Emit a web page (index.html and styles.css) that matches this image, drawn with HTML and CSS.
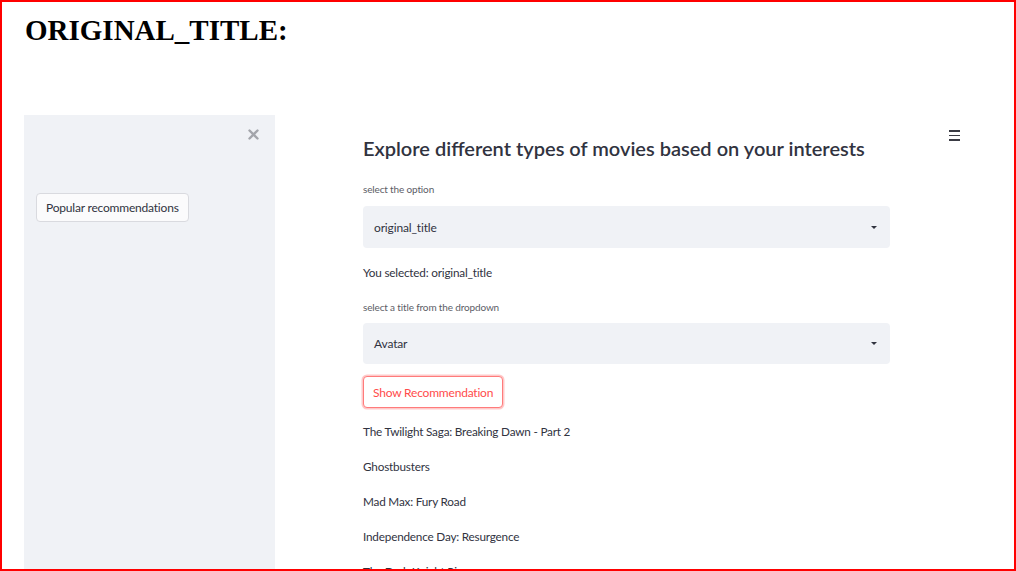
FILE: index.html
```html
<!DOCTYPE html>
<html>
<head>
<meta charset="utf-8">
<link rel="stylesheet" href="styles.css">
</head>
<body>
<div class="frame">
  <h1 class="slide-title">ORIGINAL_TITLE:</h1>
  <div class="app">
    <aside class="sidebar">
      <div class="close-row">
        <svg class="close" width="11" height="11" viewBox="0 0 11 11"><path d="M1.5 1.5 L9.5 9.5 M9.5 1.5 L1.5 9.5" stroke="#a3a5ab" stroke-width="2.4" stroke-linecap="round"/></svg>
      </div>
      <button class="side-btn">Popular recommendations</button>
    </aside>
    <main class="main">
      <div class="content">
        <h2 class="heading">Explore different types of movies based on your interests</h2>
        <label class="label first">select the option</label>
        <div class="select"><span>original_title</span><span class="caret"></span></div>
        <p class="text sel">You selected: original_title</p>
        <label class="label second">select a title from the dropdown</label>
        <div class="select"><span>Avatar</span><span class="caret"></span></div>
        <button class="primary">Show Recommendation</button>
        <p class="text item">The Twilight Saga: Breaking Dawn - Part 2</p>
        <p class="text item">Ghostbusters</p>
        <p class="text item">Mad Max: Fury Road</p>
        <p class="text item">Independence Day: Resurgence</p>
        <p class="text item">The Dark Knight Rises</p>
      </div>
      <div class="menu"><span></span><span></span><span></span></div>
    </main>
  </div>
</div>
</body>
</html>
```
FILE: styles.css
```css
html, body {
  margin: 0;
  padding: 0;
  background: #fff;
}
.frame {
  width: 1016px;
  height: 571px;
  box-sizing: border-box;
  border: 2px solid #ff0000;
  overflow: hidden;
  padding-left: 22px;
  background: #fff;
}
.slide-title {
  font-family: "Liberation Serif", serif;
  font-weight: bold;
  font-size: 29px;
  line-height: 37px;
  margin: 10px 0 0 1px;
  color: #000;
}
.app {
  display: flex;
  margin-top: 66px;
  height: 600px;
  font-family: "Lato", "Open Sans", sans-serif;
  color: #31333f;
}
.sidebar {
  width: 251px;
  flex: none;
  background: #f0f2f6;
  padding: 14px 12px 0 12px;
  box-sizing: border-box;
  display: flex;
  flex-direction: column;
  align-items: flex-start;
}
.close-row {
  align-self: stretch;
  display: flex;
  justify-content: flex-end;
  padding-right: 4px;
}
.close {
  display: block;
}
.side-btn {
  margin-top: 53px;
  height: 29px;
  padding: 0 9px;
  background: #fbfbfc;
  border: 1px solid #d9dadf;
  border-radius: 4px;
  font-family: "Lato", sans-serif;
  font-size: 12px;
  letter-spacing: -0.2px;
  color: #31333f;
}
.main {
  flex: 1;
  display: flex;
  align-items: flex-start;
  padding-left: 88px;
}
.content {
  width: 527px;
  padding-top: 20px;
  display: flex;
  flex-direction: column;
  align-items: flex-start;
}
.heading {
  margin: 0;
  font-size: 20px;
  font-weight: 600;
  line-height: 26px;
  color: #31333f;
}
.label {
  font-size: 10px;
  line-height: 16px;
  letter-spacing: -0.15px;
  color: #5c5d66;
}
.label.first {
  margin-top: 20px;
}
.label.second {
  margin-top: 17px;
}
.select {
  margin-top: 9px;
  align-self: stretch;
  height: 42px;
  background: #f0f2f6;
  border-radius: 4px;
  display: flex;
  align-items: center;
  justify-content: space-between;
  padding: 0 13px 0 11px;
  font-size: 12px;
  letter-spacing: -0.15px;
}
.label.second + .select {
  margin-top: 8px;
  height: 41px;
}
.caret {
  width: 0;
  height: 0;
  border-left: 3px solid transparent;
  border-right: 3px solid transparent;
  border-top: 3px solid #31333f;
}
.text {
  margin: 0;
  font-size: 11.75px;
  letter-spacing: -0.2px;
  line-height: 18px;
}
.sel {
  margin-top: 16px;
}
.primary {
  margin-top: 12px;
  height: 32px;
  padding: 0 9px;
  background: #fff;
  border: 1.5px solid #ff7b7b;
  box-shadow: 0 0 0 1.5px rgba(255, 75, 75, 0.3);
  border-radius: 4px;
  color: #ff4b4b;
  font-family: "Lato", sans-serif;
  font-size: 12px;
  letter-spacing: -0.2px;
}
.item {
  margin-top: 15px;
}
.item + .item {
  margin-top: 17px;
}
.menu {
  margin-left: 59px;
  margin-top: 15px;
  width: 11px;
  height: 11px;
  display: flex;
  flex-direction: column;
  justify-content: space-between;
}
.menu span {
  display: block;
  height: 1.6px;
  background: #3a3b44;
}
```
